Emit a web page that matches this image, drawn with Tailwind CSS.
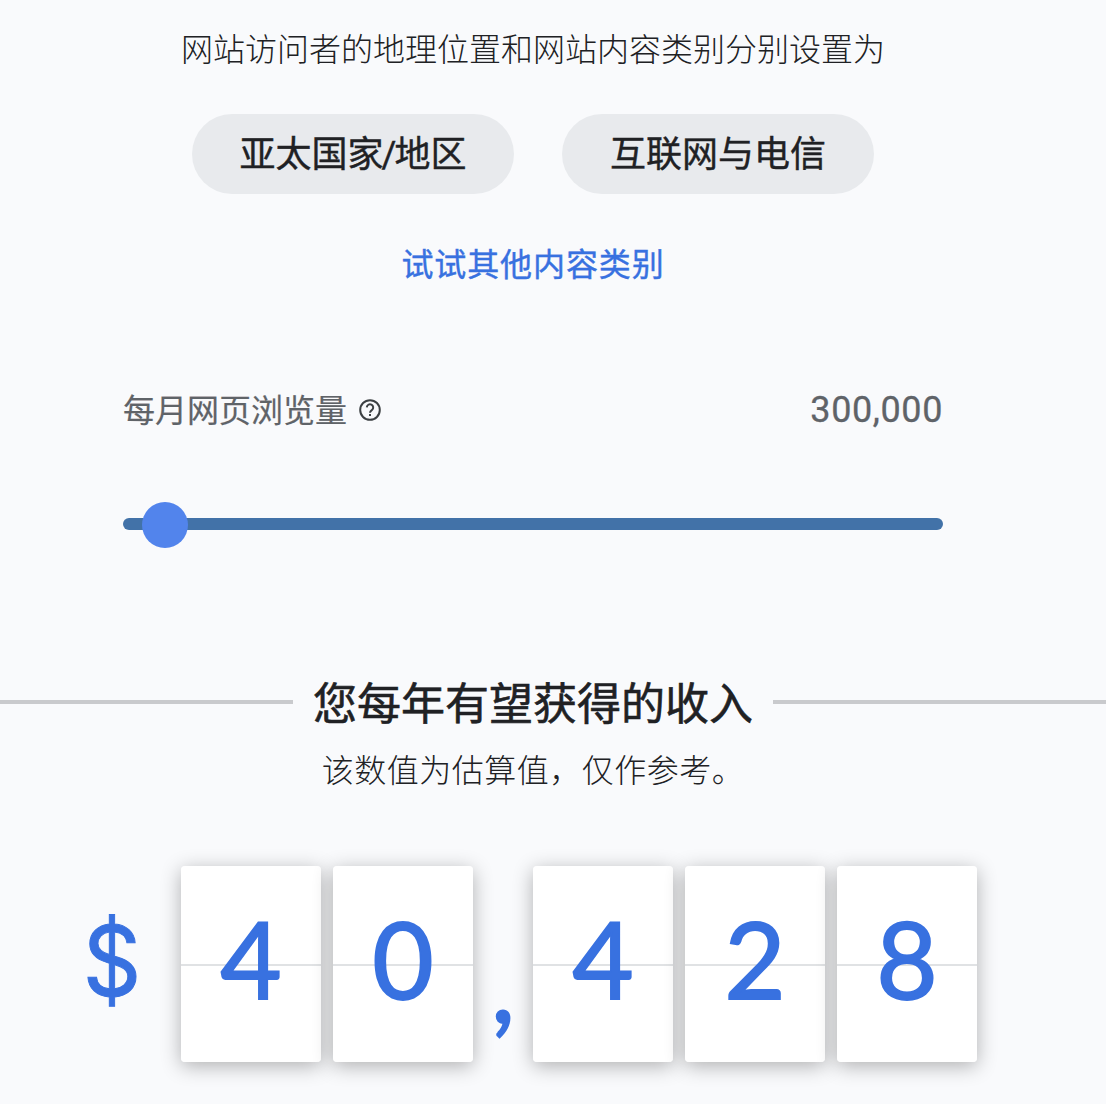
<!DOCTYPE html>
<html lang="zh-CN">
<head>
<meta charset="utf-8">
<title>收入估算</title>
<script src="https://cdn.jsdelivr.net/npm/@tailwindcss/browser@4"></script>
</head>
<body class="bg-[#f9fafc] w-[1106px] h-[1104px] overflow-hidden font-[Roboto,'Noto_Sans_CJK_SC',sans-serif] text-[#202124]">
<main class="flex flex-col">
  <section class="w-[1066px] flex flex-col items-center pt-[26px]">
    <p class="text-[32px] leading-[48px] font-light whitespace-nowrap">网站访问者的地理位置和网站内容类别分别设置为</p>
    <div class="flex gap-12 mt-[40px]">
      <span class="w-[322px] h-[80px] rounded-full bg-[#e8eaed] flex items-center justify-center text-[36px] pt-[2px] [-webkit-text-stroke:0.4px]">亚太国家<span class="font-[Roboto] -mx-[2px]">/</span>地区</span>
      <span class="w-[312px] h-[80px] rounded-full bg-[#e8eaed] flex items-center justify-center text-[36px] pt-[2px] [-webkit-text-stroke:0.4px]">互联网与电信</span>
    </div>
    <a class="mt-[47px] text-[32px] leading-[48px] tracking-[0.9px] text-[#3871e0] [-webkit-text-stroke:0.4px]">试试其他内容类别</a>
  </section>
  <section class="ml-[123px] w-[820px] mt-[97px]">
    <div class="flex justify-between items-center h-[48px] text-[#5f6368]">
      <span class="flex items-center gap-3 text-[32px] pt-px [-webkit-text-stroke:0.2px]">每月网页浏览量
        <svg class="size-[22px] -mt-px" viewBox="0 0 22 22" fill="none" stroke="#3c4043" stroke-width="2"><circle cx="11" cy="11" r="9.8"/><path d="M7.8 8.4a3.2 3.2 0 1 1 5.2 2.6c-1.2.9-2 1.4-2 2.8M11 15v2.1"/></svg>
      </span>
      <span class="text-[36px] tracking-[0.6px] [-webkit-text-stroke:0.3px]">300,000</span>
    </div>
    <div class="mt-[68px] h-[46px] relative">
      <div class="absolute inset-x-0 top-[16px] h-3 rounded-full bg-[#4272a8]"></div>
      <div class="absolute left-[19px] size-[46px] rounded-full bg-[#5284ec]"></div>
    </div>
  </section>
  <section class="mt-[121px]">
    <div class="flex items-center h-[66px]">
      <div class="w-[293px] h-1 bg-[#c9cacd]"></div>
      <h2 class="w-[480px] text-center text-[44px] pt-[6px] [-webkit-text-stroke:0.6px]">您每年有望获得的收入</h2>
      <div class="flex-1 h-1 bg-[#c9cacd]"></div>
    </div>
    <p class="w-[1066px] text-center text-[32px] leading-[48px] tracking-[0.5px] font-light mt-[12px]">该数值为估算值，仅作参考。</p>
  </section>
  <section class="mt-[71px] ml-[72px] flex h-[196px] font-[Lato,sans-serif] text-[106px] leading-[184px] text-[#3871e0] text-center [-webkit-text-stroke:1.8px]">
    <span class="w-[80px] font-[Inter] text-[98px] leading-[190px] scale-x-93 [-webkit-text-stroke:1px]">$</span>
    <div class="ml-[29px] flex gap-3">
      <div class="w-[140px] rounded-[4px] bg-[linear-gradient(#e0e2e4,#e0e2e4),linear-gradient(#fff,#fff)] bg-[length:100%_2px,100%_100%] bg-no-repeat bg-[position:0_98px,0_0] shadow-[0_4px_20px_rgba(0,0,0,0.3)]">4</div>
      <div class="w-[140px] rounded-[4px] bg-[linear-gradient(#e0e2e4,#e0e2e4),linear-gradient(#fff,#fff)] bg-[length:100%_2px,100%_100%] bg-no-repeat bg-[position:0_98px,0_0] shadow-[0_4px_20px_rgba(0,0,0,0.3)]">0</div>
    </div>
    <span class="w-[60px] pt-[24px]">,</span>
    <div class="flex gap-3">
      <div class="w-[140px] rounded-[4px] bg-[linear-gradient(#e0e2e4,#e0e2e4),linear-gradient(#fff,#fff)] bg-[length:100%_2px,100%_100%] bg-no-repeat bg-[position:0_98px,0_0] shadow-[0_4px_20px_rgba(0,0,0,0.3)]">4</div>
      <div class="w-[140px] rounded-[4px] bg-[linear-gradient(#e0e2e4,#e0e2e4),linear-gradient(#fff,#fff)] bg-[length:100%_2px,100%_100%] bg-no-repeat bg-[position:0_98px,0_0] shadow-[0_4px_20px_rgba(0,0,0,0.3)]">2</div>
      <div class="w-[140px] rounded-[4px] bg-[linear-gradient(#e0e2e4,#e0e2e4),linear-gradient(#fff,#fff)] bg-[length:100%_2px,100%_100%] bg-no-repeat bg-[position:0_98px,0_0] shadow-[0_4px_20px_rgba(0,0,0,0.3)]">8</div>
    </div>
  </section>
</main>
</body>
</html>
